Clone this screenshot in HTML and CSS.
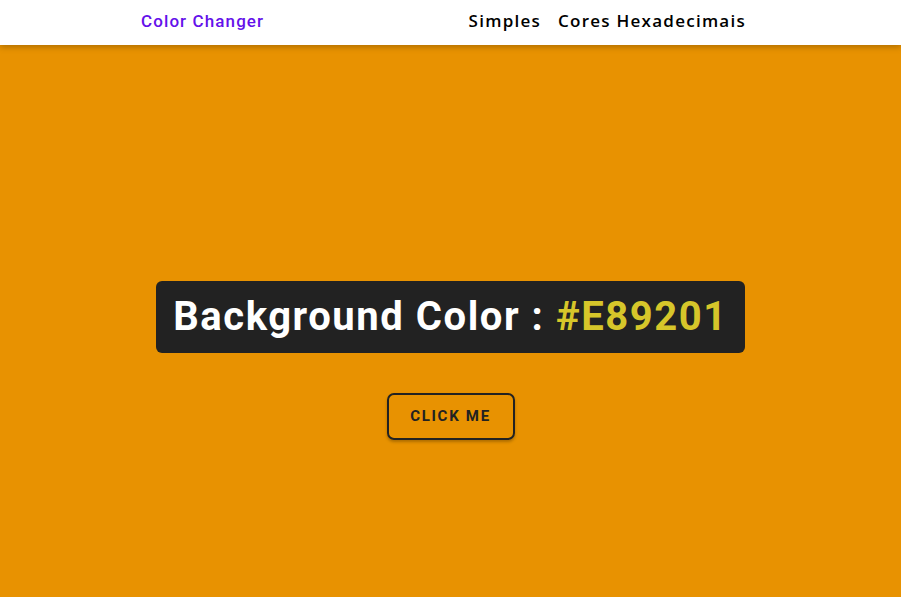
FILE: index.html
```html
<!DOCTYPE html>
<html lang="pt">
<head>
<meta charset="utf-8">
<title>Color Changer</title>
<link rel="stylesheet" href="styles.css">
</head>
<body>
<header class="topbar">
  <div class="brand">Color Changer</div>
  <nav class="nav">
    <a class="nav-link" href="#">Simples</a>
    <a class="nav-link" href="#">Cores Hexadecimais</a>
  </nav>
</header>
<main class="stage">
  <h1 class="label">Background Color : <span class="hex">#E89201</span></h1>
  <button class="btn">CLICK ME</button>
</main>
</body>
</html>
```
FILE: styles.css
```css
* { box-sizing: border-box; }
html, body { margin: 0; height: 100%; }
body {
  background: #E89201;
  font-family: Roboto, "Liberation Sans", sans-serif;
  display: flex;
  flex-direction: column;
}
.topbar {
  height: 45px;
  flex: none;
  background: #fff;
  display: flex;
  align-items: center;
  padding: 0 155px 4px 141px;
  justify-content: space-between;
  box-shadow: 0 2px 6px rgba(0,0,0,0.25);
  position: relative;
  z-index: 1;
}
.brand {
  color: #6411ea;
  font-weight: 500;
  font-size: 17px;
  letter-spacing: 1.1px;
  line-height: 20px;
}
.nav { display: flex; gap: 17px; }
.nav-link {
  color: #000;
  text-decoration: none;
  font-family: "Open Sans", sans-serif;
  font-weight: 600;
  font-size: 17px;
  letter-spacing: 1.25px;
  line-height: 20px;
}
.stage {
  flex: 1;
  display: flex;
  flex-direction: column;
  align-items: center;
  justify-content: center;
  padding-top: 78px;
}
.label {
  margin: 0;
  background: #222;
  color: #fff;
  font-size: 40px;
  font-weight: 700;
  letter-spacing: 1.55px;
  border-radius: 6px;
  padding: 9px 17px 9px 17px;
  line-height: 54px;
}
.hex { color: #d6c62a; }
.btn {
  margin-top: 40px;
  background: transparent;
  border: 2px solid #222;
  border-radius: 7px;
  color: #222;
  font-family: Roboto, sans-serif;
  font-weight: 700;
  font-size: 15px;
  letter-spacing: 1.7px;
  width: 128px;
  height: 47px;
  box-shadow: 0 2px 3px rgba(0,0,0,0.25);
  cursor: pointer;
}
```
